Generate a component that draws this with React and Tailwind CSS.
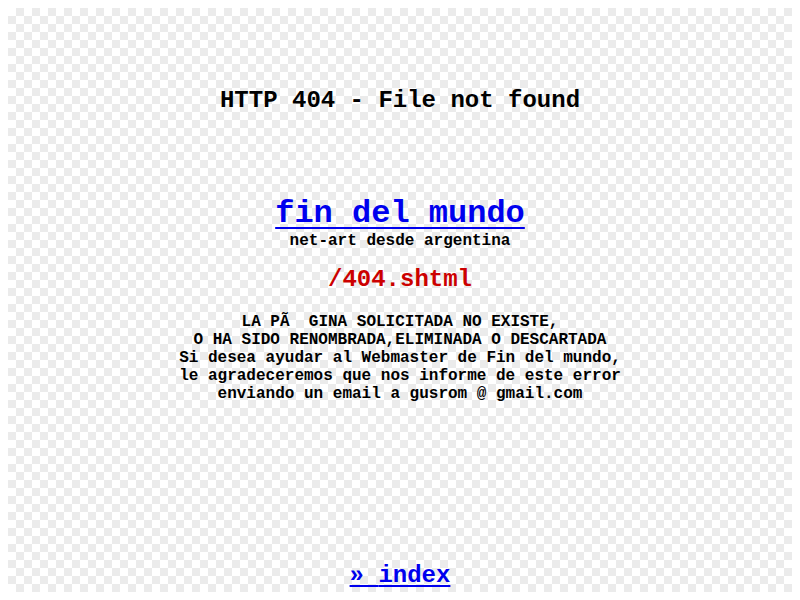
export default function App() {
  return (
    <div className="m-2 h-[584px] bg-[conic-gradient(#ebebeb_0_25%,#ffffff_0_50%,#ebebeb_0_75%,#ffffff_0)] bg-size-[16px_16px] flex flex-col items-center text-center text-black font-bold leading-[normal] font-['Liberation_Mono','Courier_New',monospace]">
      <h1 className="mt-[79px] text-[24px] leading-[normal] font-bold">HTTP 404 - File not found</h1>
      <a href="#" className="mt-[81px] text-[32px] leading-[normal] text-[#0000ee] underline decoration-2 underline-offset-[5px]">fin del mundo</a>
      <div className="text-[16px] leading-[normal]">net-art desde argentina</div>
      <div className="mt-[16px] text-[24px] leading-[normal] text-[#cc0000]">/404.shtml</div>
      <div className="mt-[20px] text-[16px] leading-[normal]">
        <div>LA PÃ{"\u00a0\u00a0"}GINA SOLICITADA NO EXISTE,</div>
        <div>O HA SIDO RENOMBRADA,ELIMINADA O DESCARTADA</div>
        <div>Si desea ayudar al Webmaster de Fin del mundo,</div>
        <div>le agradeceremos que nos informe de este error</div>
        <div>enviando un email a gusrom @ gmail.com</div>
      </div>
      <a href="#" className="mt-auto mb-[3px] text-[24px] leading-[normal] text-[#0000ee] underline decoration-2 underline-offset-[3px]">»{"\u00a0"}index</a>
    </div>
  );
}
